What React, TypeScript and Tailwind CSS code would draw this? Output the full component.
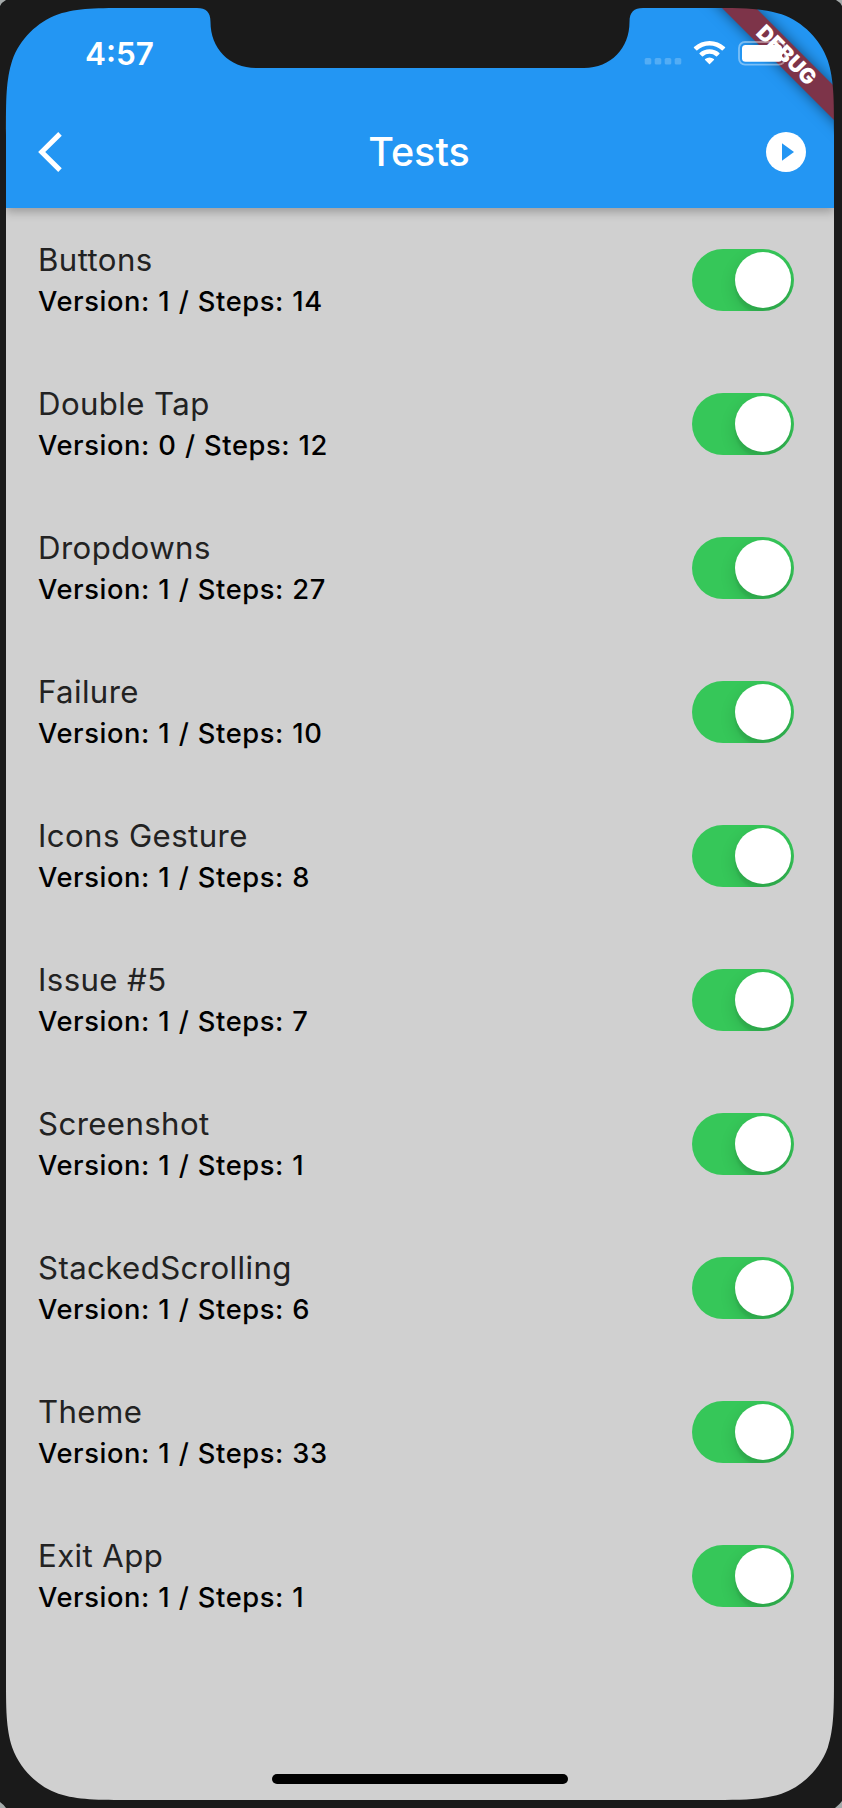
const tests = [
  { name: "Buttons", version: 1, steps: 14 },
  { name: "Double Tap", version: 0, steps: 12 },
  { name: "Dropdowns", version: 1, steps: 27 },
  { name: "Failure", version: 1, steps: 10 },
  { name: "Icons Gesture", version: 1, steps: 8 },
  { name: "Issue #5", version: 1, steps: 7 },
  { name: "Screenshot", version: 1, steps: 1 },
  { name: "StackedScrolling", version: 1, steps: 6 },
  { name: "Theme", version: 1, steps: 33 },
  { name: "Exit App", version: 1, steps: 1 },
];

function DebugRibbon() {
  return (
    <div className="absolute inset-0 overflow-hidden">
      <div className="absolute left-[630px] top-[35px] h-6 w-[300px] rotate-45 bg-[#7d3449] shadow-[0_0_14px_rgba(0,0,0,0.5)]" />
    </div>
  );
}

function DebugLabel() {
  return (
    <div className="absolute inset-0 overflow-hidden">
      <div className="absolute left-[630px] top-[35px] flex h-6 w-[300px] rotate-45 items-center justify-center pl-px text-[21.200px] font-black leading-none tracking-[0.200px] text-white">
        DEBUG
      </div>
    </div>
  );
}

function StatusIcons() {
  return (
    <svg className="h-7 w-[154px]" viewBox="0 0 154 28" fill="#fff">
      <g opacity="0.22">
        <rect x="4.7" y="20" width="6.6" height="6.6" rx="1.6" />
        <rect x="14.7" y="20" width="6.6" height="6.6" rx="1.6" />
        <rect x="24.7" y="20" width="6.6" height="6.6" rx="1.6" />
        <rect x="34.7" y="20" width="6.6" height="6.6" rx="1.6" />
      </g>
      <g transform="translate(0 -4.300)">
        <path d="M69.500 7.200a22.800 22.800 0 0 1 15.500 6.100a.7.7 0 0 1 0 1l-2.300 2.300a.7.7 0 0 1-1 0a17.900 17.900 0 0 0-24.400 0a.7.7 0 0 1-1 0l-2.300-2.300a.7.7 0 0 1 0-1a22.800 22.800 0 0 1 15.500-6.100z" />
        <path d="M69.500 15.500a15 15 0 0 1 9.900 3.700a.7.7 0 0 1 0 1l-2.400 2.400a.7.7 0 0 1-1 0a9.900 9.900 0 0 0-13 0a.7.7 0 0 1-1 0l-2.400-2.400a.7.7 0 0 1 0-1a15 15 0 0 1 9.900-3.700z" />
        <path d="M69.500 23.800a7 7 0 0 1 4.400 1.600a.7.7 0 0 1 0 1l-4 4a.6.6 0 0 1-.8 0l-4-4a.7.7 0 0 1 0-1a7 7 0 0 1 4.400-1.600z" />
      </g>
      <rect x="99" y="4" width="46" height="22.600" rx="6" fill="none" stroke="#fff" strokeWidth="1.800" opacity="0.4" />
      <rect x="102" y="7" width="40" height="16.700" rx="3.500" />
    </svg>
  );
}

function Toggle() {
  return (
    <button
      role="switch"
      aria-checked="true"
      className="flex h-[62px] w-[102px] items-center justify-end overflow-hidden rounded-full bg-[#36c759] pr-[3px]"
    >
      <span className="size-14 rounded-full bg-white shadow-[0_6px_16px_rgba(0,0,0,0.15),0_6px_2px_rgba(0,0,0,0.06)]" />
    </button>
  );
}

function Bezel() {
  return (
    <svg className="pointer-events-none absolute inset-0 z-30 h-[1808px] w-[842px]" viewBox="0 0 842 1808">
      <path
        fill="#1a1a1a"
        fillRule="evenodd"
        d="M0 6Q2 2 6 0H836Q840 2 842 6V1801Q840 1804 835 1808H6Q3 1804 0 1802Z
        M132.900 8H197C206 8 210.500 12 210.500 22C210.500 48 229 68 256 68H584C611 68 629.500 48 629.500 22C629.500 12 634 8 643 8H707.100
        C743.700 8 761.900 8 781.600 14.200C803.100 22 820 38.900 827.800 60.400C834 80.100 834 98.300 834 134.900
        V1673.100C834 1709.700 834 1727.900 827.800 1747.600C820 1769.100 803.100 1786 781.600 1793.800C761.900 1800 743.700 1800 707.100 1800
        H132.900C96.300 1800 78.100 1800 58.400 1793.800C36.900 1786 20 1769.100 12.200 1747.600C6 1727.900 6 1709.700 6 1673.100
        V134.900C6 98.300 6 80.100 12.200 60.400C20 38.900 36.900 22 58.400 14.200C78.100 8 96.300 8 132.900 8Z"
      />
    </svg>
  );
}

export default function App() {
  return (
    <div className="relative h-[1808px] w-[842px] overflow-hidden bg-[#a5aaaa] pl-1.5 pr-2 pt-2 font-['Inter',sans-serif]">
      <div className="relative flex h-[1792px] w-[828px] flex-col bg-[#d0d0d0]">
        <header className="z-10 flex h-[200px] shrink-0 flex-col bg-[#2396f3] text-white shadow-[0_4px_9px_rgba(0,0,0,0.25)]">
          <div className="h-[88px]" />
          <div className="grid h-28 grid-cols-[1fr_auto_1fr] items-center px-7">
            <svg className="ml-1 h-10 w-6 overflow-visible" viewBox="0 0 24 40" fill="none" stroke="#fff" strokeWidth="5">
              <path d="M22 1.900L3.700 20L22 38.100" />
            </svg>
            <h1 className="mr-0.5 pt-0.5 text-[39.500px] font-medium leading-none">Tests</h1>
            <svg className="size-10 justify-self-end" viewBox="0 0 40 40">
              <circle cx="20" cy="20" r="20" fill="#fff" />
              <path d="M16 11.300L28 20L16 28.700Z" fill="#2396f3" />
            </svg>
          </div>
        </header>
        <main className="flex flex-col">
          {tests.map((t) => (
            <div key={t.name} className="flex h-36 items-center justify-between pl-8 pr-10">
              <div className="flex flex-col gap-0.5 pt-px">
                <div className="text-[31.200px] leading-[40px] tracking-[0.400px] text-[#222]">{t.name}</div>
                <div className="text-[27.300px] font-medium leading-[40px] tracking-[0.580px] text-black [word-spacing:0.600px]">
                  Version: {t.version} / Steps: {t.steps}
                </div>
              </div>
              <Toggle />
            </div>
          ))}
        </main>
        <div className="mb-4 mt-auto h-2.5 w-[296px] self-center rounded-full bg-black" />
        <div className="absolute inset-0 z-20">
          <DebugRibbon />
          <div className="absolute left-0 right-0 top-[30px] flex items-start justify-between pl-[79px] pr-[40px] text-white">
            <span className="text-[31.500px] font-semibold leading-[32px]">4:57</span>
            <StatusIcons />
          </div>
          <DebugLabel />
        </div>
      </div>
      <Bezel />
    </div>
  );
}
